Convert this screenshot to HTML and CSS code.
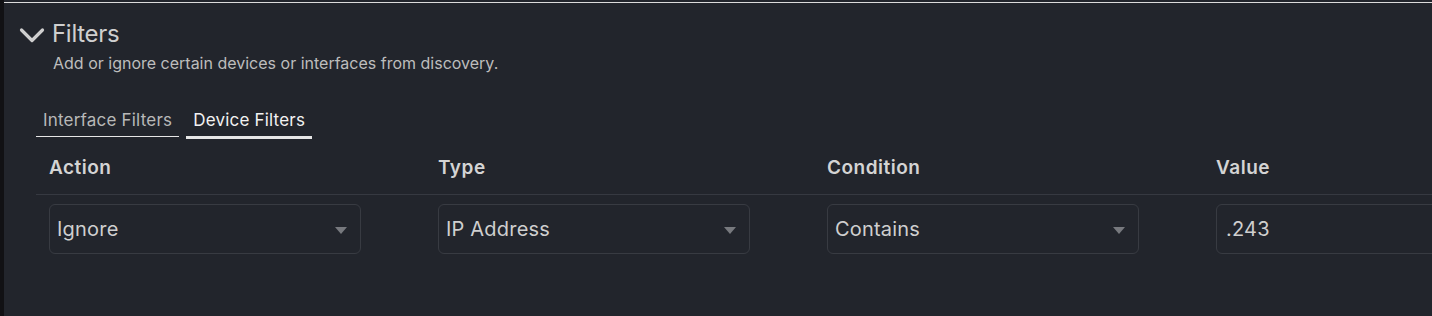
FILE: index.html
```html
<!DOCTYPE html>
<html lang="en">
<head>
  <meta charset="UTF-8" />
  <meta name="viewport" content="width=device-width, initial-scale=1.0"/>
  <title>Filters</title>
  <link rel="stylesheet" href="styles.css">
</head>
<body>

<div class="app">
  <div class="topline"></div>

  <div class="section">
    <div class="section-head">
      <svg class="chevron" width="26" height="16" viewBox="0 0 26 16">
        <polyline points="2.5,3 13,13.5 23.5,3" fill="none" stroke="#cfcfcf" stroke-width="3.2" stroke-linecap="round" stroke-linejoin="round"/>
      </svg>
      <h2 class="title">Filters</h2>
    </div>
    <p class="subtitle">Add or ignore certain devices or interfaces from discovery.</p>

    <div class="tabs">
      <div class="tab">Interface Filters</div>
      <div class="tab active">Device Filters</div>
    </div>

    <div class="table">
      <div class="row head">
        <div class="cell">Action</div>
        <div class="cell">Type</div>
        <div class="cell">Condition</div>
        <div class="cell">Value</div>
      </div>
      <div class="row body">
        <div class="cell">
          <div class="select"><span>Ignore</span><i class="caret"></i></div>
        </div>
        <div class="cell">
          <div class="select"><span>IP Address</span><i class="caret"></i></div>
        </div>
        <div class="cell">
          <div class="select"><span>Contains</span><i class="caret"></i></div>
        </div>
        <div class="cell">
          <div class="select input"><span>.243</span></div>
        </div>
      </div>
    </div>
  </div>
</div>

</body>
</html>
```

FILE: styles.css
```css
* {
  box-sizing: border-box;
}
body {
  margin: 0;
  background-color: #22252c;
  font-family: 'Inter', 'Noto Sans', sans-serif;
  color: #d2d2d2;
  overflow: hidden;
}

.app {
  border-left: 4px solid #111114;
  min-height: 100vh;
  padding-top: 2px;
  overflow: hidden;
}

.topline {
  height: 1px;
  background: #dcdcdc;
}

.section {
  padding: 0 0 0 15px;
}

.section-head {
  display: flex;
  align-items: center;
  gap: 7px;
  margin-top: 17px;
  height: 28px;
}

.chevron {
  display: block;
  margin-top: 2px;
}

.title {
  margin: 0;
  font-size: 24px;
  font-weight: 400;
  letter-spacing: -0.3px;
  color: #cfcfcf;
  line-height: 28px;
}

.subtitle {
  margin: 5px 0 0 34px;
  font-size: 16px;
  color: #bdbdbd;
  line-height: 20px;
}

.tabs {
  display: flex;
  gap: 7px;
  margin: 37px 0 0 17px;
}

.tab {
  padding: 0 7px 6px;
  font-size: 17px;
  line-height: 20px;
  letter-spacing: 0.2px;
  color: #b8b8b8;
  border-bottom: 1px solid #e6e6e6;
  margin-bottom: 2px;
}

.tab.active {
  color: #f2f2f2;
  border-bottom: 3px solid #e6e6e6;
  margin-bottom: 0;
}

.table {
  margin-left: 17px;
}

.row {
  display: grid;
  grid-template-columns: repeat(4, 389px);
  padding-left: 13px;
}

.row.head {
  height: 56px;
  align-items: center;
  border-bottom: 1px solid #363941;
  font-size: 19px;
  font-weight: 600;
  letter-spacing: 0.5px;
  color: #d4d4d4;
}

.row.head .cell {
  padding-top: 2px;
}

.row.body {
  padding-top: 9px;
}

.select {
  width: 312px;
  height: 50px;
  border: 1px solid #383b42;
  border-radius: 6px;
  display: flex;
  align-items: center;
  justify-content: space-between;
  padding: 0 13px 0 7px;
  font-size: 20px;
  letter-spacing: 0.2px;
  color: #cfcfcf;
}

.select.input {
  width: 260px;
  padding-left: 9px;
}

.caret {
  width: 0;
  height: 0;
  border-left: 6px solid transparent;
  border-right: 6px solid transparent;
  border-top: 7px solid #77797e;
  margin-top: 2px;
}
```
